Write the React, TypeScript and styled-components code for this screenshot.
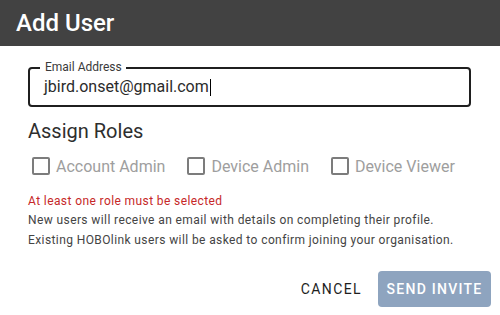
import React from "react";
import styled, { createGlobalStyle } from "styled-components";

const Global = createGlobalStyle`
  html, body { margin: 0; padding: 0; background: #fff; }
  body { font-family: Roboto, "Noto Sans", Arial, sans-serif; }
  * { box-sizing: border-box; }
`;

const Dialog = styled.div`
  width: 500px;
  height: 315px;
  display: flex;
  flex-direction: column;
  background: #fff;
  overflow: hidden;
`;

const Header = styled.div`
  height: 46px;
  background: #424242;
  display: flex;
  align-items: center;
  padding-left: 16px;
`;

const Title = styled.h1`
  margin: 0;
  font-size: 24px;
  font-weight: 500;
  color: #fff;
  line-height: 1;
`;

const Content = styled.div`
  padding: 21px 29px 0 28px;
  display: flex;
  flex-direction: column;
`;

const Field = styled.div`
  position: relative;
  height: 40px;
  border: 2px solid #1f1f1f;
  border-radius: 4px;
  display: flex;
  align-items: center;
  padding-left: 14px;
`;

const FieldLabel = styled.span`
  position: absolute;
  left: 10px;
  top: -9px;
  padding: 0 4px 0 5px;
  background: #fff;
  font-size: 12px;
  line-height: 14px;
  color: #3a3a3a;
`;

const Value = styled.span`
  font-size: 16px;
  color: #2b2b2b;
  line-height: 20px;
  display: inline-flex;
  align-items: center;
`;

const Caret = styled.span`
  display: inline-block;
  width: 1px;
  height: 17px;
  background: #000;
  margin-left: 1px;
`;

const SectionTitle = styled.h2`
  margin: 12px 0 0;
  font-size: 20px;
  font-weight: 400;
  line-height: 24px;
  color: #2e2e2e;
`;

const RoleRow = styled.div`
  display: flex;
  align-items: center;
  gap: 22px;
  margin-top: 11px;
  padding-left: 4px;
  height: 24px;
`;

const Role = styled.label`
  display: flex;
  align-items: center;
  gap: 6px;
  font-size: 16px;
  color: #9e9e9e;
`;

const Box = styled.span`
  width: 18px;
  height: 18px;
  border: 2px solid #7c7c7c;
  border-radius: 2px;
  display: inline-block;
`;

const ErrorText = styled.div`
  margin-top: 14px;
  font-size: 12px;
  line-height: 18px;
  color: #c62828;
  letter-spacing: 0.4px;
`;

const Info = styled.div`
  font-size: 12px;
  line-height: 20px;
  color: #444;
  letter-spacing: 0.4px;
`;

const Actions = styled.div`
  margin-top: auto;
  display: flex;
  justify-content: flex-end;
  align-items: center;
  gap: 8px;
  padding: 0 9px 8px 0;
`;

const TextButton = styled.button`
  border: none;
  background: transparent;
  font-family: inherit;
  font-size: 14px;
  font-weight: 400;
  letter-spacing: 1.4px;
  color: #1e1e1e;
  padding: 6px 8px;
  height: 36px;
  cursor: pointer;
`;

const PrimaryButton = styled.button<{ $disabled?: boolean }>`
  border: none;
  background: ${(p) => (p.$disabled ? "#8ea4bf" : "#3f6ea3")};
  color: #fff;
  font-family: inherit;
  font-size: 14px;
  font-weight: 500;
  letter-spacing: 1.25px;
  height: 36px;
  width: 113px;
  border-radius: 4px;
  padding: 0;
`;

const roles = ["Account Admin", "Device Admin", "Device Viewer"];

export default function App() {
  return (
    <>
      <Global />
      <Dialog>
        <Header>
          <Title>Add User</Title>
        </Header>
        <Content>
          <Field>
            <FieldLabel>Email Address</FieldLabel>
            <Value>
              jbird.onset@gmail.com
              <Caret />
            </Value>
          </Field>
          <SectionTitle>Assign Roles</SectionTitle>
          <RoleRow>
            {roles.map((r) => (
              <Role key={r}>
                <Box />
                {r}
              </Role>
            ))}
          </RoleRow>
          <ErrorText>At least one role must be selected</ErrorText>
          <Info>New users will receive an email with details on completing their profile.</Info>
          <Info>Existing HOBOlink users will be asked to confirm joining your organisation.</Info>
        </Content>
        <Actions>
          <TextButton>CANCEL</TextButton>
          <PrimaryButton $disabled>SEND INVITE</PrimaryButton>
        </Actions>
      </Dialog>
    </>
  );
}
